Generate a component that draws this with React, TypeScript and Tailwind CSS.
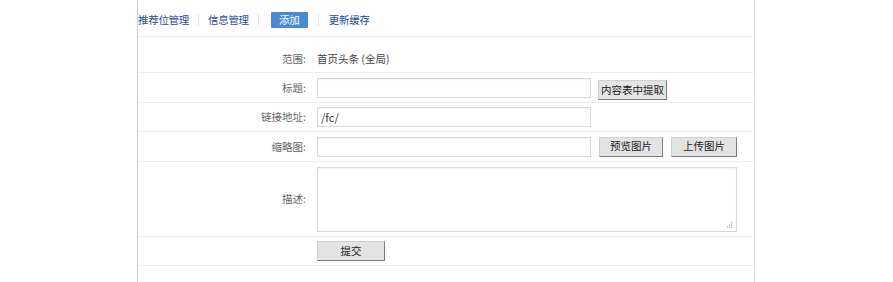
const font = "font-['Noto_Sans_CJK_SC','Noto_Sans',sans-serif]";

function Label({ children }: { children: React.ReactNode }) {
  return (
    <div className="w-[179px] shrink-0 pr-[11px] text-right text-[10.5px] text-[#666]">{children}</div>
  );
}

function Btn({ children, w }: { children: React.ReactNode; w: string }) {
  return (
    <button
      className={`${w} h-[20px] border border-[#d0d0d0] border-b-[#7a7a7a] border-r-[#7a7a7a] bg-[#e3e3e3] text-[10.5px] leading-none text-[#222]`}
    >
      {children}
    </button>
  );
}

const inputCls =
  "h-[20px] w-[274px] border border-[#d9d9d9] bg-white px-[3px] text-[11px] text-[#333] shadow-[inset_0_1px_2px_rgba(0,0,0,0.06)] outline-none";

export default function App() {
  return (
    <div className={`h-[282px] w-[893px] bg-white pl-[137px] ${font}`}>
      <div className="flex h-full w-[618px] flex-col border-x border-l-[#d0d0d0] border-r-[#dcdcdc]">
        <div className="flex h-[37px] items-center border-b border-[#eeeeee] pt-[3px] text-[10.5px] tracking-[-0.3px] text-[#1d4c97]">
          <span>推荐位管理</span>
          <span className="mx-[9px] h-[12px] w-px bg-[#e2e2e2]" />
          <span>信息管理</span>
          <span className="ml-[9px] mr-[12px] h-[12px] w-px bg-[#e2e2e2]" />
          <span className="flex h-[16px] w-[37px] items-center justify-center rounded-[1px] bg-[#4a8ad3] text-white">
            添加
          </span>
          <span className="mx-[10px] h-[12px] w-px bg-[#e2e2e2]" />
          <span>更新缓存</span>
        </div>

        <div className="flex h-[36px] items-center border-b border-[#eeeeee] pt-[8px]">
          <Label>范围:</Label>
          <span className="text-[10.5px] text-[#444]">首页头条 (全局)</span>
        </div>

        <div className="flex h-[30px] items-center border-b border-[#eeeeee]">
          <Label>标题:</Label>
          <input className={inputCls} />
          <div className="ml-[7px]">
            <Btn w="w-[69px]">内容表中提取</Btn>
          </div>
        </div>

        <div className="flex h-[29px] items-center border-b border-[#eeeeee]">
          <Label>链接地址:</Label>
          <input className={inputCls} defaultValue="/fc/" />
        </div>

        <div className="flex h-[30px] items-center border-b border-[#eeeeee]">
          <Label>缩略图:</Label>
          <input className={inputCls} />
          <div className="ml-[8px] flex gap-[8px]">
            <Btn w="w-[64px]">预览图片</Btn>
            <Btn w="w-[66px]">上传图片</Btn>
          </div>
        </div>

        <div className="flex h-[75px] items-center border-b border-[#eeeeee]">
          <Label>描述:</Label>
          <div className="relative">
            <textarea className="block h-[65px] w-[420px] resize-none border border-[#d9d9d9] bg-white shadow-[inset_0_1px_2px_rgba(0,0,0,0.06)] outline-none" />
            <svg className="absolute bottom-[4px] right-[4px]" width="7" height="7" viewBox="0 0 7 7">
              <rect x="5" y="1" width="1.2" height="1.2" fill="#aaa" />
              <rect x="3" y="3.5" width="1.2" height="1.2" fill="#aaa" />
              <rect x="5" y="3.5" width="1.2" height="1.2" fill="#aaa" />
              <rect x="1" y="5.5" width="1.2" height="1.2" fill="#aaa" />
              <rect x="3" y="5.5" width="1.2" height="1.2" fill="#aaa" />
              <rect x="5" y="5.5" width="1.2" height="1.2" fill="#aaa" />
            </svg>
          </div>
        </div>

        <div className="flex h-[29px] items-center border-b border-[#eeeeee]">
          <div className="w-[179px] shrink-0" />
          <Btn w="w-[68px]">提交</Btn>
        </div>
      </div>
    </div>
  );
}
